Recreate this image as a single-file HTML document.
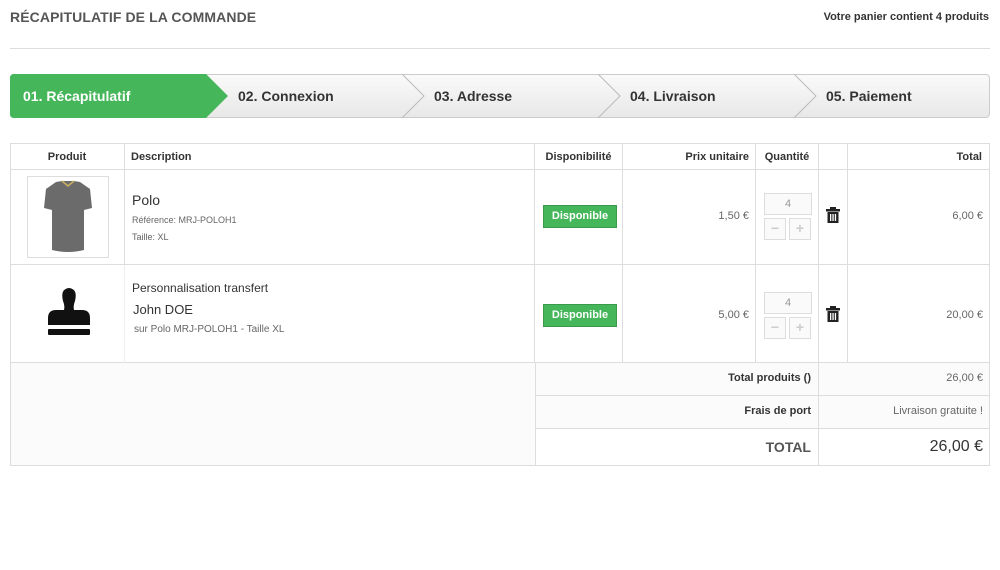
<!DOCTYPE html>
<html><head><meta charset="utf-8"><style>
body{margin:0;width:1000px;height:570px;background:#fff;font-family:"Liberation Sans",Arial,sans-serif;position:relative;overflow:hidden;color:#333}
.a{position:absolute}
.h1{left:10px;top:9px;font-size:14px;font-weight:bold;color:#555;letter-spacing:0.1px}
.cnt{right:11px;top:11px;font-size:11px;font-weight:bold;color:#333}
.hr{left:10px;top:48px;width:980px;height:1px;background:#ddd}
.steps{left:10px;top:74px;width:978px;height:42px;border:1px solid #ccc;border-radius:4px;background:linear-gradient(#fafafa,#e8e8e8)}
.st{top:88px;font-size:14px;font-weight:bold;color:#333}
.cell{position:absolute;box-sizing:border-box;border-right:1px solid #ddd;border-bottom:1px solid #ddd}
.th{font-size:11px;font-weight:bold;color:#333;text-align:center}
.btn{position:absolute;background:#46b65a;border:1px solid #3a9a4b;color:#fff;font-size:11px;font-weight:bold;text-align:center;line-height:20px;width:72px;height:21px}
.qty{position:absolute;width:46px;height:20px;border:1px solid #ddd;background:#fafafa;color:#999;font-size:11px;text-align:center;line-height:20px}
.pm{position:absolute;width:20px;height:20px;border:1px solid #ddd;background:#fafafa;color:#ccc;font-size:14px;text-align:center;line-height:19px;font-weight:bold}
.r{font-size:11px;color:#666;text-align:right}
</style></head><body>
<div class="a h1">RÉCAPITULATIF DE LA COMMANDE</div>
<div class="a cnt">Votre panier contient 4 produits</div>
<div class="a hr"></div>
<div class="a steps"></div>
<svg class="a" style="left:10px;top:74px" width="980" height="44">
<path d="M4 0 H196 L218 22 L196 44 H4 Q0 44 0 40 V4 Q0 0 4 0Z" fill="#46b65a"/>
<path d="M392 0 L414 22 L392 44" fill="none" stroke="#bbb"/>
<path d="M588 0 L610 22 L588 44" fill="none" stroke="#bbb"/>
<path d="M784 0 L806 22 L784 44" fill="none" stroke="#bbb"/>
</svg>
<div class="a st" style="left:23px;color:#fff">01. Récapitulatif</div>
<div class="a st" style="left:238px">02. Connexion</div>
<div class="a st" style="left:434px">03. Adresse</div>
<div class="a st" style="left:630px">04. Livraison</div>
<div class="a st" style="left:826px">05. Paiement</div>

<div class="a" style="left:10px;top:143px;width:980px;height:323px;border:1px solid #ddd;box-sizing:border-box"></div>
<!-- header -->
<div class="cell th" style="left:10px;top:143px;width:115px;height:27px;line-height:27px;border-top:1px solid #ddd">Produit</div>
<div class="cell th" style="left:125px;top:143px;width:410px;height:27px;line-height:27px;text-align:left;padding-left:6px;border-top:1px solid #ddd">Description</div>
<div class="cell th" style="left:535px;top:143px;width:88px;height:27px;line-height:27px;border-top:1px solid #ddd">Disponibilité</div>
<div class="cell th" style="left:623px;top:143px;width:133px;height:27px;line-height:27px;text-align:right;padding-right:6px;border-top:1px solid #ddd">Prix unitaire</div>
<div class="cell th" style="left:756px;top:143px;width:63px;height:27px;line-height:27px;border-top:1px solid #ddd">Quantité</div>
<div class="cell th" style="left:819px;top:143px;width:29px;height:27px;border-top:1px solid #ddd"></div>
<div class="cell th" style="left:848px;top:143px;width:142px;height:27px;line-height:27px;text-align:right;padding-right:7px;border-top:1px solid #ddd">Total</div>
<!-- row 1 -->
<div class="cell" style="left:10px;top:170px;width:115px;height:95px"></div>
<div class="cell" style="left:125px;top:170px;width:410px;height:95px"></div>
<div class="cell" style="left:535px;top:170px;width:88px;height:95px"></div>
<div class="cell" style="left:623px;top:170px;width:133px;height:95px"></div>
<div class="cell" style="left:756px;top:170px;width:63px;height:95px"></div>
<div class="cell" style="left:819px;top:170px;width:29px;height:95px"></div>
<div class="cell" style="left:848px;top:170px;width:142px;height:95px"></div>
<div class="a" style="left:27px;top:176px;width:80px;height:80px;border:1px solid #ddd"></div>
<svg class="a" style="left:40px;top:180px" width="56" height="74"><path d="M16 2 L22 1 L34 1 L40 2 L50 9 L52 28 L44 30 L44 70 Q28 74 12 70 L12 30 L4 28 L6 9 Z" fill="#6b6b6b"/><path d="M22 1 L28 6 L34 1" fill="none" stroke="#c8b060" stroke-width="1.5"/></svg>
<div class="a" style="left:132px;top:192px;font-size:14px;color:#333">Polo</div>
<div class="a" style="left:132px;top:215px;font-size:9px;color:#666">Référence: MRJ-POLOH1</div>
<div class="a" style="left:132px;top:232px;font-size:9px;color:#666">Taille: XL</div>
<div class="btn" style="left:543px;top:205px">Disponible</div>
<div class="a r" style="left:623px;top:210px;width:126px">1,50 €</div>
<div class="qty" style="left:764px;top:193px">4</div>
<div class="pm" style="left:764px;top:218px">−</div>
<div class="pm" style="left:789px;top:218px">+</div>
<svg class="a" style="left:826px;top:207px" width="14" height="17"><rect x="0" y="2" width="14" height="2.5" fill="#222"/><rect x="4" y="0" width="6" height="3" fill="#222"/><path d="M1.5 5 H12.5 V16 H1.5Z" fill="#222"/><rect x="4" y="7" width="1.3" height="7" fill="#fff"/><rect x="6.4" y="7" width="1.3" height="7" fill="#fff"/><rect x="8.8" y="7" width="1.3" height="7" fill="#fff"/></svg>
<div class="a r" style="left:848px;top:210px;width:135px">6,00 €</div>
<!-- row 2 -->
<div class="cell" style="left:10px;top:265px;width:115px;height:98px;border-right-color:#eee"></div>
<div class="cell" style="left:125px;top:265px;width:410px;height:98px"></div>
<div class="cell" style="left:535px;top:265px;width:88px;height:98px"></div>
<div class="cell" style="left:623px;top:265px;width:133px;height:98px"></div>
<div class="cell" style="left:756px;top:265px;width:63px;height:98px"></div>
<div class="cell" style="left:819px;top:265px;width:29px;height:98px"></div>
<div class="cell" style="left:848px;top:265px;width:142px;height:98px"></div>
<svg class="a" style="left:46px;top:287px" width="46" height="50"><path d="M17 14 Q14 2 23 1 Q32 2 29 14 Q27 19 28 23 L36 23 Q44 23 44 31 L44 38 L2 38 L2 31 Q2 23 10 23 L18 23 Q19 19 17 14Z" fill="#111"/><rect x="2" y="42" width="42" height="6" rx="1" fill="#111"/></svg>
<div class="a" style="left:132px;top:281px;font-size:12px;color:#333">Personnalisation transfert</div>
<div class="a" style="left:133px;top:302px;font-size:13px;color:#333">John DOE</div>
<div class="a" style="left:134px;top:324px;font-size:10px;color:#666">sur Polo MRJ-POLOH1 - Taille XL</div>
<div class="btn" style="left:543px;top:304px">Disponible</div>
<div class="a r" style="left:623px;top:309px;width:126px">5,00 €</div>
<div class="qty" style="left:764px;top:292px">4</div>
<div class="pm" style="left:764px;top:317px">−</div>
<div class="pm" style="left:789px;top:317px">+</div>
<svg class="a" style="left:826px;top:306px" width="14" height="17"><rect x="0" y="2" width="14" height="2.5" fill="#222"/><rect x="4" y="0" width="6" height="3" fill="#222"/><path d="M1.5 5 H12.5 V16 H1.5Z" fill="#222"/><rect x="4" y="7" width="1.3" height="7" fill="#fff"/><rect x="6.4" y="7" width="1.3" height="7" fill="#fff"/><rect x="8.8" y="7" width="1.3" height="7" fill="#fff"/></svg>
<div class="a r" style="left:848px;top:309px;width:135px">20,00 €</div>
<!-- footer -->
<div class="cell" style="left:10px;top:363px;width:526px;height:103px;background:#fbfbfb;border-left:1px solid #ddd"></div>
<div class="cell" style="left:536px;top:363px;width:283px;height:33px;background:#fbfbfb"></div>
<div class="cell" style="left:819px;top:363px;width:171px;height:33px;background:#fbfbfb"></div>
<div class="cell" style="left:536px;top:396px;width:283px;height:33px;background:#fbfbfb"></div>
<div class="cell" style="left:819px;top:396px;width:171px;height:33px;background:#fbfbfb"></div>
<div class="cell" style="left:536px;top:429px;width:283px;height:37px;background:#fff"></div>
<div class="cell" style="left:819px;top:429px;width:171px;height:37px;background:#fff"></div>
<div class="a" style="left:535px;top:372px;width:276px;text-align:right;font-size:11px;font-weight:bold;color:#333">Total produits ()</div>
<div class="a r" style="left:819px;top:372px;width:164px">26,00 €</div>
<div class="a" style="left:535px;top:405px;width:276px;text-align:right;font-size:11px;font-weight:bold;color:#333">Frais de port</div>
<div class="a r" style="left:819px;top:405px;width:164px">Livraison gratuite !</div>
<div class="a" style="left:535px;top:439px;width:276px;text-align:right;font-size:14px;font-weight:bold;color:#555">TOTAL</div>
<div class="a" style="left:819px;top:438px;width:164px;text-align:right;font-size:16px;color:#333">26,00 €</div>
</body></html>
